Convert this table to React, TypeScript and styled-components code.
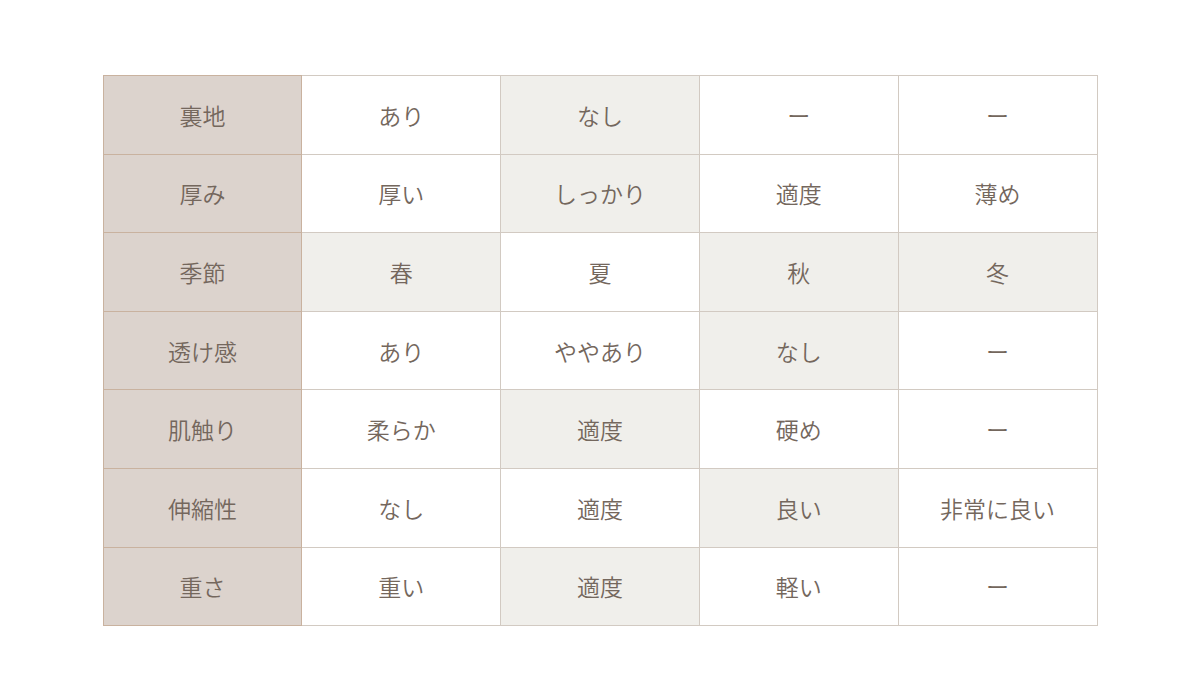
import React from 'react'
import styled, { createGlobalStyle } from 'styled-components'

const GlobalStyle = createGlobalStyle`
  html, body {
    margin: 0;
    padding: 0;
    background: #ffffff;
  }
  body {
    font-family: "Noto Sans CJK JP", "Noto Sans", sans-serif;
  }
`

const Page = styled.div`
  width: 1200px;
  height: 700px;
  padding-top: 75px;
  box-sizing: border-box;
`

const Table = styled.table`
  width: 995px;
  margin: 0 auto;
  border-collapse: collapse;
  table-layout: fixed;
`

const HeadCell = styled.th`
  height: 77.6px;
  padding: 0;
  background: #dcd3cd;
  border: 1px solid #c9b29f;
  color: #74675d;
  font-size: 23px;
  font-weight: 350;
  text-align: center;
  vertical-align: middle;
`

const Cell = styled.td<{ $shade?: boolean }>`
  padding: 0;
  background: ${(p) => (p.$shade ? '#f0efeb' : '#ffffff')};
  border: 1px solid #d2cac2;
  color: #74675d;
  font-size: 23px;
  font-weight: 350;
  text-align: center;
  vertical-align: middle;
`

type Row = { label: string; cells: [string, boolean][] }

const rows: Row[] = [
  { label: '裏地', cells: [['あり', false], ['なし', true], ['ー', false], ['ー', false]] },
  { label: '厚み', cells: [['厚い', false], ['しっかり', true], ['適度', false], ['薄め', false]] },
  { label: '季節', cells: [['春', true], ['夏', false], ['秋', true], ['冬', true]] },
  { label: '透け感', cells: [['あり', false], ['ややあり', false], ['なし', true], ['ー', false]] },
  { label: '肌触り', cells: [['柔らか', false], ['適度', true], ['硬め', false], ['ー', false]] },
  { label: '伸縮性', cells: [['なし', false], ['適度', false], ['良い', true], ['非常に良い', false]] },
  { label: '重さ', cells: [['重い', false], ['適度', true], ['軽い', false], ['ー', false]] }
]

export default function App() {
  return (
    <Page>
      <GlobalStyle />
      <Table>
        <tbody>
          {rows.map((row) => (
            <tr key={row.label}>
              <HeadCell scope="row">{row.label}</HeadCell>
              {row.cells.map(([text, shade], i) => (
                <Cell key={i} $shade={shade}>
                  {text}
                </Cell>
              ))}
            </tr>
          ))}
        </tbody>
      </Table>
    </Page>
  )
}
